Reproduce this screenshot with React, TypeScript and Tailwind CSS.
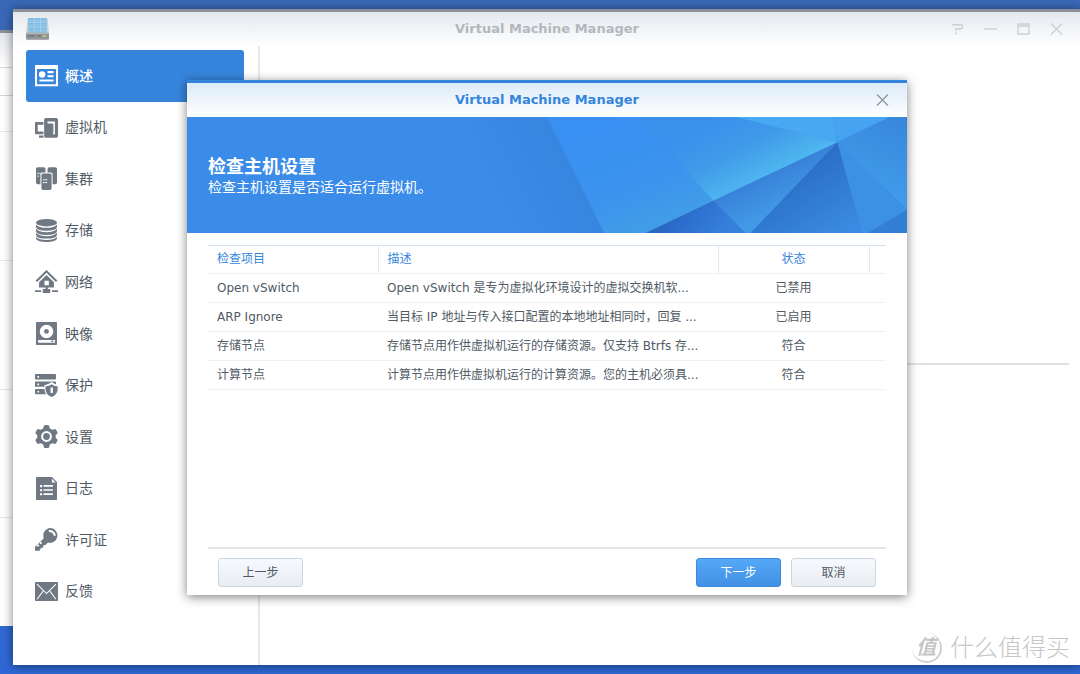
import React from "react";
import clsx from "clsx";

type IconProps = { children: React.ReactNode };

function Icon({ children }: IconProps) {
  return (
    <svg viewBox="0 0 68 68" className="h-[23px] w-[23px] shrink-0" fill="currentColor" aria-hidden="true">
      {children}
    </svg>
  );
}

const overviewIcon = (
  <Icon>
    <path fillRule="evenodd" d="M2 3h64q2 0 2 2v59q0 2-2 2H2q-2 0-2-2V5q0-2 2-2zM6 15v45h56V15z" />
    <circle cx="21" cy="31" r="9.5" />
    <path d="M37 21h18v6H37zM37 33h18v6H37zM13 46h42v6H13z" />
  </Icon>
);

const machineIcon = (
  <Icon>
    <path d="M3 18h22v8H8v20h17v8H3q-3 0-3-3V21q0-3 3-3zM12 58h13v6H12z" />
    <rect x="27" y="6" width="41" height="58" rx="5" />
    <path d="M37 16h22v38h-6V22H37z" fill="#fff" />
    <path d="M55 24v26" stroke="currentColor" strokeWidth="1.5" />
  </Icon>
);

const clusterIcon = (
  <Icon>
    <rect x="3" y="1" width="28" height="50" rx="5" />
    <rect x="37" y="1" width="28" height="50" rx="5" />
    <rect x="16" y="16" width="36" height="54" rx="6" fill="#fff" />
    <rect x="19" y="19" width="30" height="49" rx="5" />
    <path d="M7 17h4v4H7zM7 25h4v4H7zM13 17h4v3h-4zM24 36h4v4h-4zM24 44h4v4h-4zM30 36h6v3h-6zM30 44h6v3h-6z" fill="#fff" />
  </Icon>
);

const storageIcon = (
  <Icon>
    <ellipse cx="34" cy="11" rx="31" ry="11" />
    <path d="M3 16q8 10 31 10t31-10v8q-2 11-31 11T3 24z" />
    <path d="M3 29q8 10 31 10t31-10v7q-2 11-31 11T3 36z" />
    <path d="M3 41q8 10 31 10t31-10v6q-2 11-31 11T3 47z" />
    <path d="M3 53q8 9 31 9t31-9v5q-2 10-31 10T3 58z" />
  </Icon>
);

const networkIcon = (
  <Icon>
    <path d="M4 33 34 4l30 29" fill="none" stroke="currentColor" strokeWidth="6" />
    <path fillRule="evenodd" d="M34 15 56 36v16H12V36zM28 32v13h13V32z" />
    <path d="M31 50h7v6h-7zM23 56h22v12H23zM0 60h18v5H0zM50 60h18v5H50z" />
  </Icon>
);

const imageIcon = (
  <Icon>
    <path fillRule="evenodd" d="M5 0h58q2 0 2 2v64q0 2-2 2H5q-2 0-2-2V2q0-2 2-2zM34 8a20 20 0 1 0 0 40 20 20 0 0 0 0-40zM9 53v8h50v-8z" />
    <circle cx="34" cy="28" r="7" />
    <path d="M48 55h6v4h-6z" />
  </Icon>
);

const protectIcon = (
  <Icon>
    <path fillRule="evenodd" d="M2 0h58q2 0 2 2v12q0 2-2 2H2q-2 0-2-2V2q0-2 2-2zM7 6v5h5V6z" />
    <path fillRule="evenodd" d="M2 22h58q2 0 2 2v12q0 2-2 2H2q-2 0-2-2V24q0-2 2-2zM7 28v5h5v-5z" />
    <path fillRule="evenodd" d="M2 44h36v16H2q-2 0-2-2V46q0-2 2-2zM7 50v5h5v-5z" />
    <path d="M49 24q9 7 21 9v12q-1 19-21 25-20-6-21-25V33q12-2 21-9z" fill="#fff" />
    <path d="M49 30q7 6 18 7v8q-1 16-18 23-17-7-18-23v-8q11-1 18-7z" />
    <path d="M46 40h7v16h-7z" fill="#fff" />
  </Icon>
);

const settingsIcon = (
  <Icon>
    <path d="M27 1q7-2 14 0l3 9 7 4 9-2q5 5 7 12l-6 7v6l6 7q-2 7-7 12l-9-2-7 4-3 9q-7 2-14 0l-3-9-7-4-9 2q-5-5-7-12l6-7v-6l-6-7q2-7 7-12l9 2 7-4z" />
    <circle cx="34" cy="34" r="13" fill="none" stroke="#fff" strokeWidth="6" />
  </Icon>
);

const logIcon = (
  <Icon>
    <path d="M5 0h45l15 15v51q0 2-2 2H5q-2 0-2-2V2q0-2 2-2z" />
    <path d="M50 5v11h11zM15 24h6v6h-6zM25 24h28v5H25zM15 36h6v6h-6zM25 36h28v5H25zM15 48h6v6h-6zM25 48h28v5H25z" fill="#fff" />
  </Icon>
);

const licenseIcon = (
  <Icon>
    <path d="M46 0a22 22 0 1 1-8 43L31 50l-6 1-1 7-6 1-5 8H0V56l26-26A22 22 0 0 1 46 0z" />
    <path d="M41 9q14-1 18 14" fill="none" stroke="#fff" strokeWidth="6" />
    <path d="m5 52 4-4 4 4-4 4zM13 44l4-4 4 4-4 4z" fill="#fff" />
  </Icon>
);

const feedbackIcon = (
  <Icon>
    <rect y="6" width="68" height="56" rx="2" />
    <path d="m6 12 28 28 28-28M6 57l18-24M62 57 44 33" fill="none" stroke="#fff" strokeWidth="3" />
  </Icon>
);

const menu = [
  { label: "概述", icon: overviewIcon },
  { label: "虚拟机", icon: machineIcon },
  { label: "集群", icon: clusterIcon },
  { label: "存储", icon: storageIcon },
  { label: "网络", icon: networkIcon },
  { label: "映像", icon: imageIcon },
  { label: "保护", icon: protectIcon },
  { label: "设置", icon: settingsIcon },
  { label: "日志", icon: logIcon },
  { label: "许可证", icon: licenseIcon },
  { label: "反馈", icon: feedbackIcon },
];

const checks = [
  { item: "Open vSwitch", desc: "Open vSwitch 是专为虚拟化环境设计的虚拟交换机软...", status: "已禁用" },
  { item: "ARP Ignore", desc: "当目标 IP 地址与传入接口配置的本地地址相同时，回复 ...", status: "已启用" },
  { item: "存储节点", desc: "存储节点用作供虚拟机运行的存储资源。仅支持 Btrfs 存...", status: "符合" },
  { item: "计算节点", desc: "计算节点用作供虚拟机运行的计算资源。您的主机必须具...", status: "符合" },
];

function AppLogo() {
  return (
    <svg viewBox="0 0 69 66" className="ml-[5px] h-[22px] w-[23px]" aria-hidden="true">
      <path d="M5 2h60l4 44H0z" fill="#aab2b8" opacity="0.5" />
      <rect x="6" y="0" width="57" height="45" rx="3" fill="#8cc3e4" />
      <path d="M7 13h55M7 28h55M25 0v44M44 0v44" stroke="#a9d7f0" strokeWidth="2" />
      <path d="M8 2h15M27 2h15M46 2h15M8 16h15M27 16h15M46 16h15M8 31h15M27 31h15M46 31h15" stroke="#76b4da" strokeWidth="2" />
      <rect x="0" y="44" width="69" height="21" rx="3" fill="#929698" />
      <path d="M2 46h65" stroke="#b9bdbf" strokeWidth="3" />
      <path d="M5 54h21M34 54h12" stroke="#66696b" strokeWidth="3" />
      <path d="M50 54h10" stroke="#d6d45c" strokeWidth="4" />
    </svg>
  );
}

function WindowButton({ label, d }: { label: string; d: string }) {
  return (
    <button type="button" aria-label={label} className="flex h-6 w-[33px] items-center justify-center">
      <svg viewBox="0 0 13 12" className="h-3 w-[13px]" fill="none" stroke="currentColor" strokeWidth="1.4">
        <path d={d} />
      </svg>
    </button>
  );
}

const crossPath = "M1 .5 12 11.5M12 .5 1 11.5";

function BannerArt() {
  return (
    <svg viewBox="0 0 720 115" preserveAspectRatio="xMaxYMid slice" className="absolute inset-0 h-full w-full" aria-hidden="true">
      <defs>
        <linearGradient id="left" gradientUnits="userSpaceOnUse" x1="321" y1="92" x2="391" y2="57">
          <stop offset="0" stopColor="#3a8ce8" />
          <stop offset="1" stopColor="#3785df" />
        </linearGradient>
        <linearGradient id="mid" gradientUnits="userSpaceOnUse" x1="400" y1="10" x2="440" y2="120">
          <stop offset="0" stopColor="#3990f3" />
          <stop offset="0.6" stopColor="#3b93ee" />
          <stop offset="1" stopColor="#429de6" />
        </linearGradient>
        <linearGradient id="glow" gradientUnits="userSpaceOnUse" x1="530" y1="0" x2="566" y2="70">
          <stop offset="0" stopColor="#3b90ec" />
          <stop offset="0.5" stopColor="#409ae9" />
          <stop offset="1" stopColor="#50b8f0" />
        </linearGradient>
        <linearGradient id="wing" gradientUnits="userSpaceOnUse" x1="576" y1="60" x2="592" y2="94">
          <stop offset="0" stopColor="#3882d9" />
          <stop offset="1" stopColor="#429ae6" />
        </linearGradient>
        <linearGradient id="deep" gradientUnits="userSpaceOnUse" x1="490" y1="95" x2="530" y2="125">
          <stop offset="0" stopColor="#2a68c6" />
          <stop offset="1" stopColor="#3680dc" />
        </linearGradient>
        <linearGradient id="shade" gradientUnits="userSpaceOnUse" x1="610" y1="50" x2="650" y2="115">
          <stop offset="0" stopColor="#2b6dc5" />
          <stop offset="1" stopColor="#398ae0" />
        </linearGradient>
        <linearGradient id="edge" gradientUnits="userSpaceOnUse" x1="720" y1="0" x2="690" y2="70">
          <stop offset="0" stopColor="#3787db" />
          <stop offset="1" stopColor="#4199e9" />
        </linearGradient>
      </defs>
      <path d="M290 0h73l57 115H290z" fill="url(#left)" />
      <path d="M363 0h90l75 83-67 32h-41z" fill="url(#mid)" />
      <path d="M453 0h97l101 25-123 58z" fill="url(#glow)" />
      <path d="M550 0h96l5 25z" fill="#48a8f1" />
      <path d="M646 0h57l-52 25z" fill="#45a3f2" />
      <path d="M703 0h17v92l-69-67z" fill="url(#edge)" />
      <path d="M651 25 528 83l32 32h5z" fill="url(#wing)" />
      <path d="m461 115 67-32 32 32z" fill="url(#deep)" />
      <path d="m651 25-86 90h111z" fill="url(#shade)" />
      <path d="m651 25 25 90h5l39-23z" fill="#3c91e4" />
      <path d="m681 115 39-23v23z" fill="#337fd5" />
    </svg>
  );
}

function BackWindow() {
  return (
    <div className="absolute top-[30px] bottom-12 left-0 flex w-20 flex-col border-t-[3px] border-[#8b919c] bg-white">
      <div className="h-[35px] border-b border-[#d3dae1] bg-linear-to-b from-[#e3e7ec] to-white" />
      <div className="h-7 border-b border-[#cfd8e1]" />
      <div className="h-9 border-b border-[#e6e8ea]" />
      <div className="h-[129px] border-b border-[#e6e8ea]" />
      <div className="h-[129px] border-b border-[#e6e8ea]" />
      <div className="h-32 border-b border-[#e6e8ea]" />
    </div>
  );
}

function Sidebar() {
  return (
    <nav className="w-[247px] shrink-0 border-r-2 border-[#e7e9ea] pr-[14px] pl-[13px]">
      <ul className="flex h-full flex-col pt-1 pb-12">
        {menu.map(({ label, icon }, i) => (
          <li key={label} className="flex-1">
            <a
              href="#"
              aria-current={i === 0 ? "page" : undefined}
              className={clsx(
                "flex h-full items-center gap-[7px] rounded-[3px] px-[9px] text-sm",
                i === 0 ? "bg-[#3685dd] font-medium text-white" : "text-[#505a64]",
              )}
            >
              <span className={i === 0 ? "text-white" : "text-[#6f7883]"}>{icon}</span>
              {label}
            </a>
          </li>
        ))}
      </ul>
    </nav>
  );
}

function ActionButton({ children, primary }: { children: React.ReactNode; primary?: boolean }) {
  return (
    <button
      type="button"
      className={clsx(
        "h-[29px] w-[85px] rounded-[3px] border bg-linear-to-b pt-px text-xs",
        primary
          ? "border-[#3d8ade] from-[#55a8f8] to-[#4190e4] text-white"
          : "border-[#ccd6e0] from-[#f6f9fd] to-[#e9edf2] text-[#505a64]",
      )}
    >
      {children}
    </button>
  );
}

function CheckTable() {
  return (
    <table className="w-full table-fixed border-collapse text-left text-xs whitespace-nowrap text-[#505a64]">
      <colgroup>
        <col className="w-[170px]" />
        <col />
        <col className="w-[151px]" />
        <col className="w-[17px]" />
      </colgroup>
      <thead>
        <tr className="h-7 border-t border-b border-t-[#d5e1f0] border-b-[#e9f1f9] text-[#3685dd]">
          <th className="border-r border-[#e0ebf6] px-[9px] font-normal">检查项目</th>
          <th className="border-r border-[#e0ebf6] px-[9px] font-normal">描述</th>
          <th className="border-r border-[#e0ebf6] text-center font-normal">状态</th>
          <th aria-hidden="true" />
        </tr>
      </thead>
      <tbody>
        {checks.map((row) => (
          <tr key={row.item} className="h-[29px] border-b border-[#eef1f5]">
            <td className="px-[9px]">{row.item}</td>
            <td className="px-[9px]">{row.desc}</td>
            <td className="text-center">{row.status}</td>
            <td />
          </tr>
        ))}
      </tbody>
    </table>
  );
}

function CheckDialog() {
  return (
    <section
      role="dialog"
      aria-label="检查主机设置"
      className="flex h-[515px] w-[720px] flex-col border-t-[3px] border-[#3685dd] bg-white shadow-[0_2px_10px_rgba(0,0,0,0.5)]"
    >
      <header className="grid h-[34px] shrink-0 grid-cols-[1fr_auto_1fr] items-center bg-linear-to-b from-[#dcebf8] to-white px-2">
        <h2 className="col-start-2 text-[13px] font-bold text-[#3685dd]">Virtual Machine Manager</h2>
        <div className="flex justify-end text-[#8f98a1]">
          <WindowButton label="关闭" d={crossPath} />
        </div>
      </header>

      <div className="relative h-[116px] shrink-0 bg-[#3a8ce8] px-[21px] pt-[38px] text-white">
        <BannerArt />
        <div className="relative">
          <h3 className="text-lg leading-6 font-bold">检查主机设置</h3>
          <p className="text-sm leading-4">检查主机设置是否适合运行虚拟机。</p>
        </div>
      </div>

      <div className="flex-1 px-[21px] pt-3">
        <CheckTable />
      </div>

      <footer className="mx-[21px] flex items-center border-t-2 border-[#e4e5e6] px-[10px] pt-[9px] pb-2">
        <ActionButton>上一步</ActionButton>
        <div className="ml-auto flex gap-[10px]">
          <ActionButton primary>下一步</ActionButton>
          <ActionButton>取消</ActionButton>
        </div>
      </footer>
    </section>
  );
}

function Watermark() {
  return (
    <div className="absolute right-[10px] bottom-[10px] flex items-center gap-2 text-[#c6c6c6] [text-shadow:1px_1px_1px_#ffffff]">
      <span className="flex h-[30px] w-[30px] items-center justify-center rounded-full border-r-2 border-b-2 border-[#cfcfcf] text-xl leading-none font-bold italic">
        值
      </span>
      <span className="text-2xl leading-8 font-light">什么值得买</span>
    </div>
  );
}

export default function App() {
  return (
    <div
      lang="zh-CN"
      className="relative flex h-screen min-h-[600px] overflow-hidden bg-linear-to-b from-[#3a69b8] to-[#2f68d6] pt-[9px] pb-[9px] pl-[13px] font-['DejaVu_Sans','Noto_Sans_CJK_SC',sans-serif]"
    >
      <BackWindow />

      <div className="relative -mr-px flex flex-1 flex-col border-t-[3px] border-[#8b919c] bg-white shadow-[0_1px_10px_rgba(0,0,0,0.5)]">
        <header className="grid h-[34px] shrink-0 grid-cols-[1fr_auto_1fr] items-center bg-linear-to-b from-[#e4e8ed] to-white px-2">
          <AppLogo />
          <h1 className="text-[13px] font-bold text-[#b3b8bd]">Virtual Machine Manager</h1>
          <div className="flex justify-end text-[#ccd0d4]">
            <WindowButton label="帮助" d="M1 1.7h8.5q2 0 2 2t-2 2H5V8M4.3 10.5h1.6" />
            <WindowButton label="最小化" d="M0 6h13" />
            <WindowButton label="最大化" d="M1 1h11v10H1zM1 3h11" />
            <WindowButton label="关闭" d={crossPath} />
          </div>
        </header>

        <div className="flex flex-1">
          <Sidebar />
          <main className="flex-1 pr-3 pl-3">
            <div className="h-[319px] border-b-2 border-[#e0e1e2]" />
          </main>
        </div>

        <div className="absolute -top-[3px] right-0 bottom-0 left-0 flex items-center justify-center">
          <CheckDialog />
        </div>
      </div>

      <Watermark />
    </div>
  );
}
